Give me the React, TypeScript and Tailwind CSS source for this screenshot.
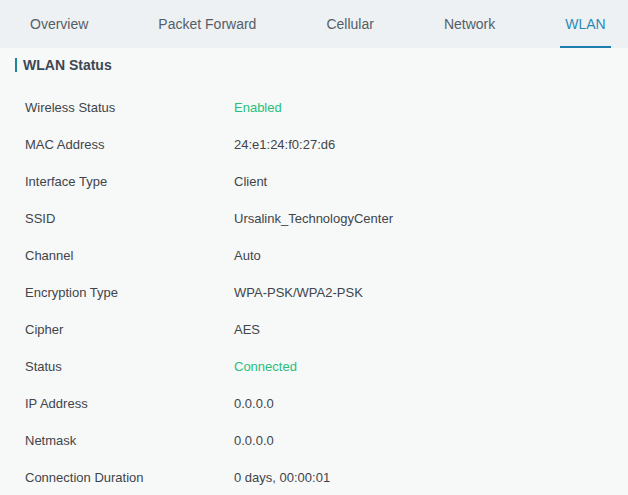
const tabs = ['Overview', 'Packet Forward', 'Cellular', 'Network', 'WLAN'];

const rows: { label: string; value: string; ok?: boolean }[] = [
  { label: 'Wireless Status', value: 'Enabled', ok: true },
  { label: 'MAC Address', value: '24:e1:24:f0:27:d6' },
  { label: 'Interface Type', value: 'Client' },
  { label: 'SSID', value: 'Ursalink_TechnologyCenter' },
  { label: 'Channel', value: 'Auto' },
  { label: 'Encryption Type', value: 'WPA-PSK/WPA2-PSK' },
  { label: 'Cipher', value: 'AES' },
  { label: 'Status', value: 'Connected', ok: true },
  { label: 'IP Address', value: '0.0.0.0' },
  { label: 'Netmask', value: '0.0.0.0' },
  { label: 'Connection Duration', value: '0 days, 00:00:01' },
];

export default function App() {
  return (
    <div className="h-[495px] w-[628px] overflow-hidden bg-[#f7f8f8] font-['Liberation_Sans',Arial,sans-serif]">
      <nav className="flex h-[48px] items-stretch gap-[60px] bg-[#edf1f3] pl-[25px]">
        {tabs.map((t) => {
          const active = t === 'WLAN';
          return (
            <div
              key={t}
              className={
                active
                  ? 'flex items-center border-b-[2px] border-[#1e7fae] px-[5px] pt-[2px] text-[14px] text-[#2b8ab8]'
                  : 'flex items-center border-b-[2px] border-transparent px-[5px] pt-[2px] text-[14px] text-[#555e66]'
              }
            >
              {t}
            </div>
          );
        })}
      </nav>

      <div className="flex h-[34px] items-center pl-[15px]">
        <span className="mr-[6px] h-[14px] w-[2px] bg-[#1b8798]" />
        <h3 className="text-[14px] font-bold text-[#3b4853]">WLAN Status</h3>
      </div>

      <div className="mt-[7px]">
        {rows.map((r) => (
          <div key={r.label} className="flex h-[37px] items-center text-[13px] text-[#3f454a]">
            <span className="w-[234px] pl-[25px]">{r.label}</span>
            <span className={r.ok ? 'text-[#28c07a]' : ''}>{r.value}</span>
          </div>
        ))}
      </div>
    </div>
  );
}
